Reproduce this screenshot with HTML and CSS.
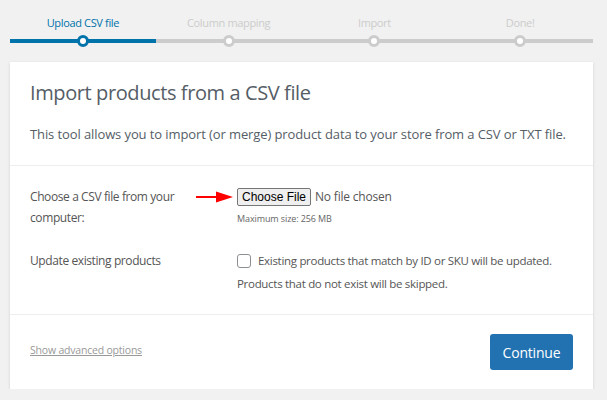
FILE: index.html
```html
<!DOCTYPE html>
<html>
<head>
    <title>Import products</title>
    <link rel="stylesheet" href="styles.css">
</head>
<body>
    <ol class="steps">
        <li class="step active">Upload CSV file</li>
        <li class="step">Column mapping</li>
        <li class="step">Import</li>
        <li class="step">Done!</li>
    </ol>

    <div class="card">
        <header class="card-head">
            <h2>Import products from a CSV file</h2>
            <p>This tool allows you to import (or merge) product data to your store from a CSV or TXT file.</p>
        </header>

        <section class="card-body">
            <div class="row">
                <div class="label">Choose a CSV file from your computer:</div>
                <div class="field">
                    <div class="file-line">
                        <svg class="arrow" width="38" height="12" viewBox="0 0 38 12">
                            <path d="M0 5h22v2H0z" fill="#f00"/>
                            <path d="M20 0.5L37 6L20 11.5z" fill="#f00"/>
                        </svg>
                        <button class="file-btn" type="button">Choose File</button>
                        <span class="file-name">No file chosen</span>
                    </div>
                    <small class="max-size">Maximum size: 256 MB</small>
                </div>
            </div>
            <div class="row">
                <div class="label">Update existing products</div>
                <div class="field">
                    <label class="check-line"><span class="checkbox"></span>Existing products that match by ID or SKU will be updated.</label>
                    <div class="note">Products that do not exist will be skipped.</div>
                </div>
            </div>
        </section>

        <footer class="card-foot">
            <a class="advanced" href="#">Show advanced options</a>
            <button class="continue" type="button">Continue</button>
        </footer>
    </div>
</body>
</html>
```

FILE: styles.css
```css
body {
    margin: 0;
    background: #f1f1f1;
    font-family: "Open Sans", "Noto Sans", sans-serif;
    color: #555;
}
.steps {
    display: flex;
    list-style: none;
    margin: 0;
    padding: 14px 14px 0 10px;
}
.step {
    flex: 1;
    position: relative;
    text-align: center;
    font-size: 11px;
    line-height: 16px;
    color: #ccc;
    padding-top: 1px;
    padding-bottom: 8px;
    border-bottom: 4px solid #ccc;
    letter-spacing: -0.35px;
}
.step::after {
    content: "";
    position: absolute;
    left: 50%;
    bottom: -8px;
    width: 6px;
    height: 6px;
    margin-left: -6px;
    border: 3px solid #ccc;
    border-radius: 50%;
    background: #fff;
}
.step.active {
    color: #0073aa;
    border-bottom-color: #0073aa;
}
.step.active::after {
    border-color: #0073aa;
}
.card {
    margin: 19px 14px 0 10px;
    background: #fff;
    box-shadow: 0 1px 3px rgba(0, 0, 0, 0.13);
}
.card-head {
    padding: 17px 20px 0;
    border-bottom: 1px solid #eee;
}
.card-head h2 {
    margin: 0;
    font-size: 20px;
    font-weight: 400;
    line-height: 28px;
    color: #555d66;
    letter-spacing: -0.4px;
}
.card-head p {
    margin: 17px 0 21px;
    font-size: 13px;
    line-height: 20px;
    color: #555d66;
    letter-spacing: -0.1px;
}
.card-body {
    padding: 20px 20px 19px;
    border-bottom: 1px solid #eee;
}
.row {
    display: flex;
    margin-bottom: 22px;
}
.row:last-child {
    margin-bottom: 0;
}
.label {
    width: 160px;
    font-size: 12px;
    line-height: 21px;
    letter-spacing: -0.4px;
    margin-right: 47px;
}
.field {
    flex: 1;
    font-size: 11.5px;
    letter-spacing: -0.3px;
}
.file-line {
    display: flex;
    align-items: center;
    position: relative;
    height: 21px;
}
.arrow {
    position: absolute;
    left: -41px;
    top: 5px;
}
.file-btn {
    font-family: "Liberation Sans", Arial, sans-serif;
    font-size: 12px;
    height: 18px;
    padding: 0 4px;
    background: #efefef;
    border: 1px solid #767676;
    border-radius: 2px;
    color: #000;
    margin-right: 4px;
    letter-spacing: 0;
}
.file-name {
    font-size: 12px;
    color: #555;
    letter-spacing: -0.2px;
}
.max-size {
    display: block;
    margin-top: 5px;
    font-size: 9px;
    color: #666;
    letter-spacing: -0.1px;
}
.check-line {
    display: flex;
    align-items: center;
    line-height: 22px;
}
.checkbox {
    width: 12px;
    height: 12px;
    border: 1px solid #8c8f94;
    border-radius: 3px;
    margin-right: 7px;
}
.note {
    line-height: 23px;
}
.card-foot {
    display: flex;
    justify-content: space-between;
    align-items: center;
    padding: 19px 20px 19px;
}
.advanced {
    font-size: 10.5px;
    color: #999;
    letter-spacing: -0.2px;
    margin-top: -4px;
}
.continue {
    font-family: inherit;
    font-size: 14px;
    color: #fff;
    background: #2271b1;
    border: none;
    border-radius: 3px;
    width: 83px;
    height: 36px;
    letter-spacing: -0.2px;
}
```
